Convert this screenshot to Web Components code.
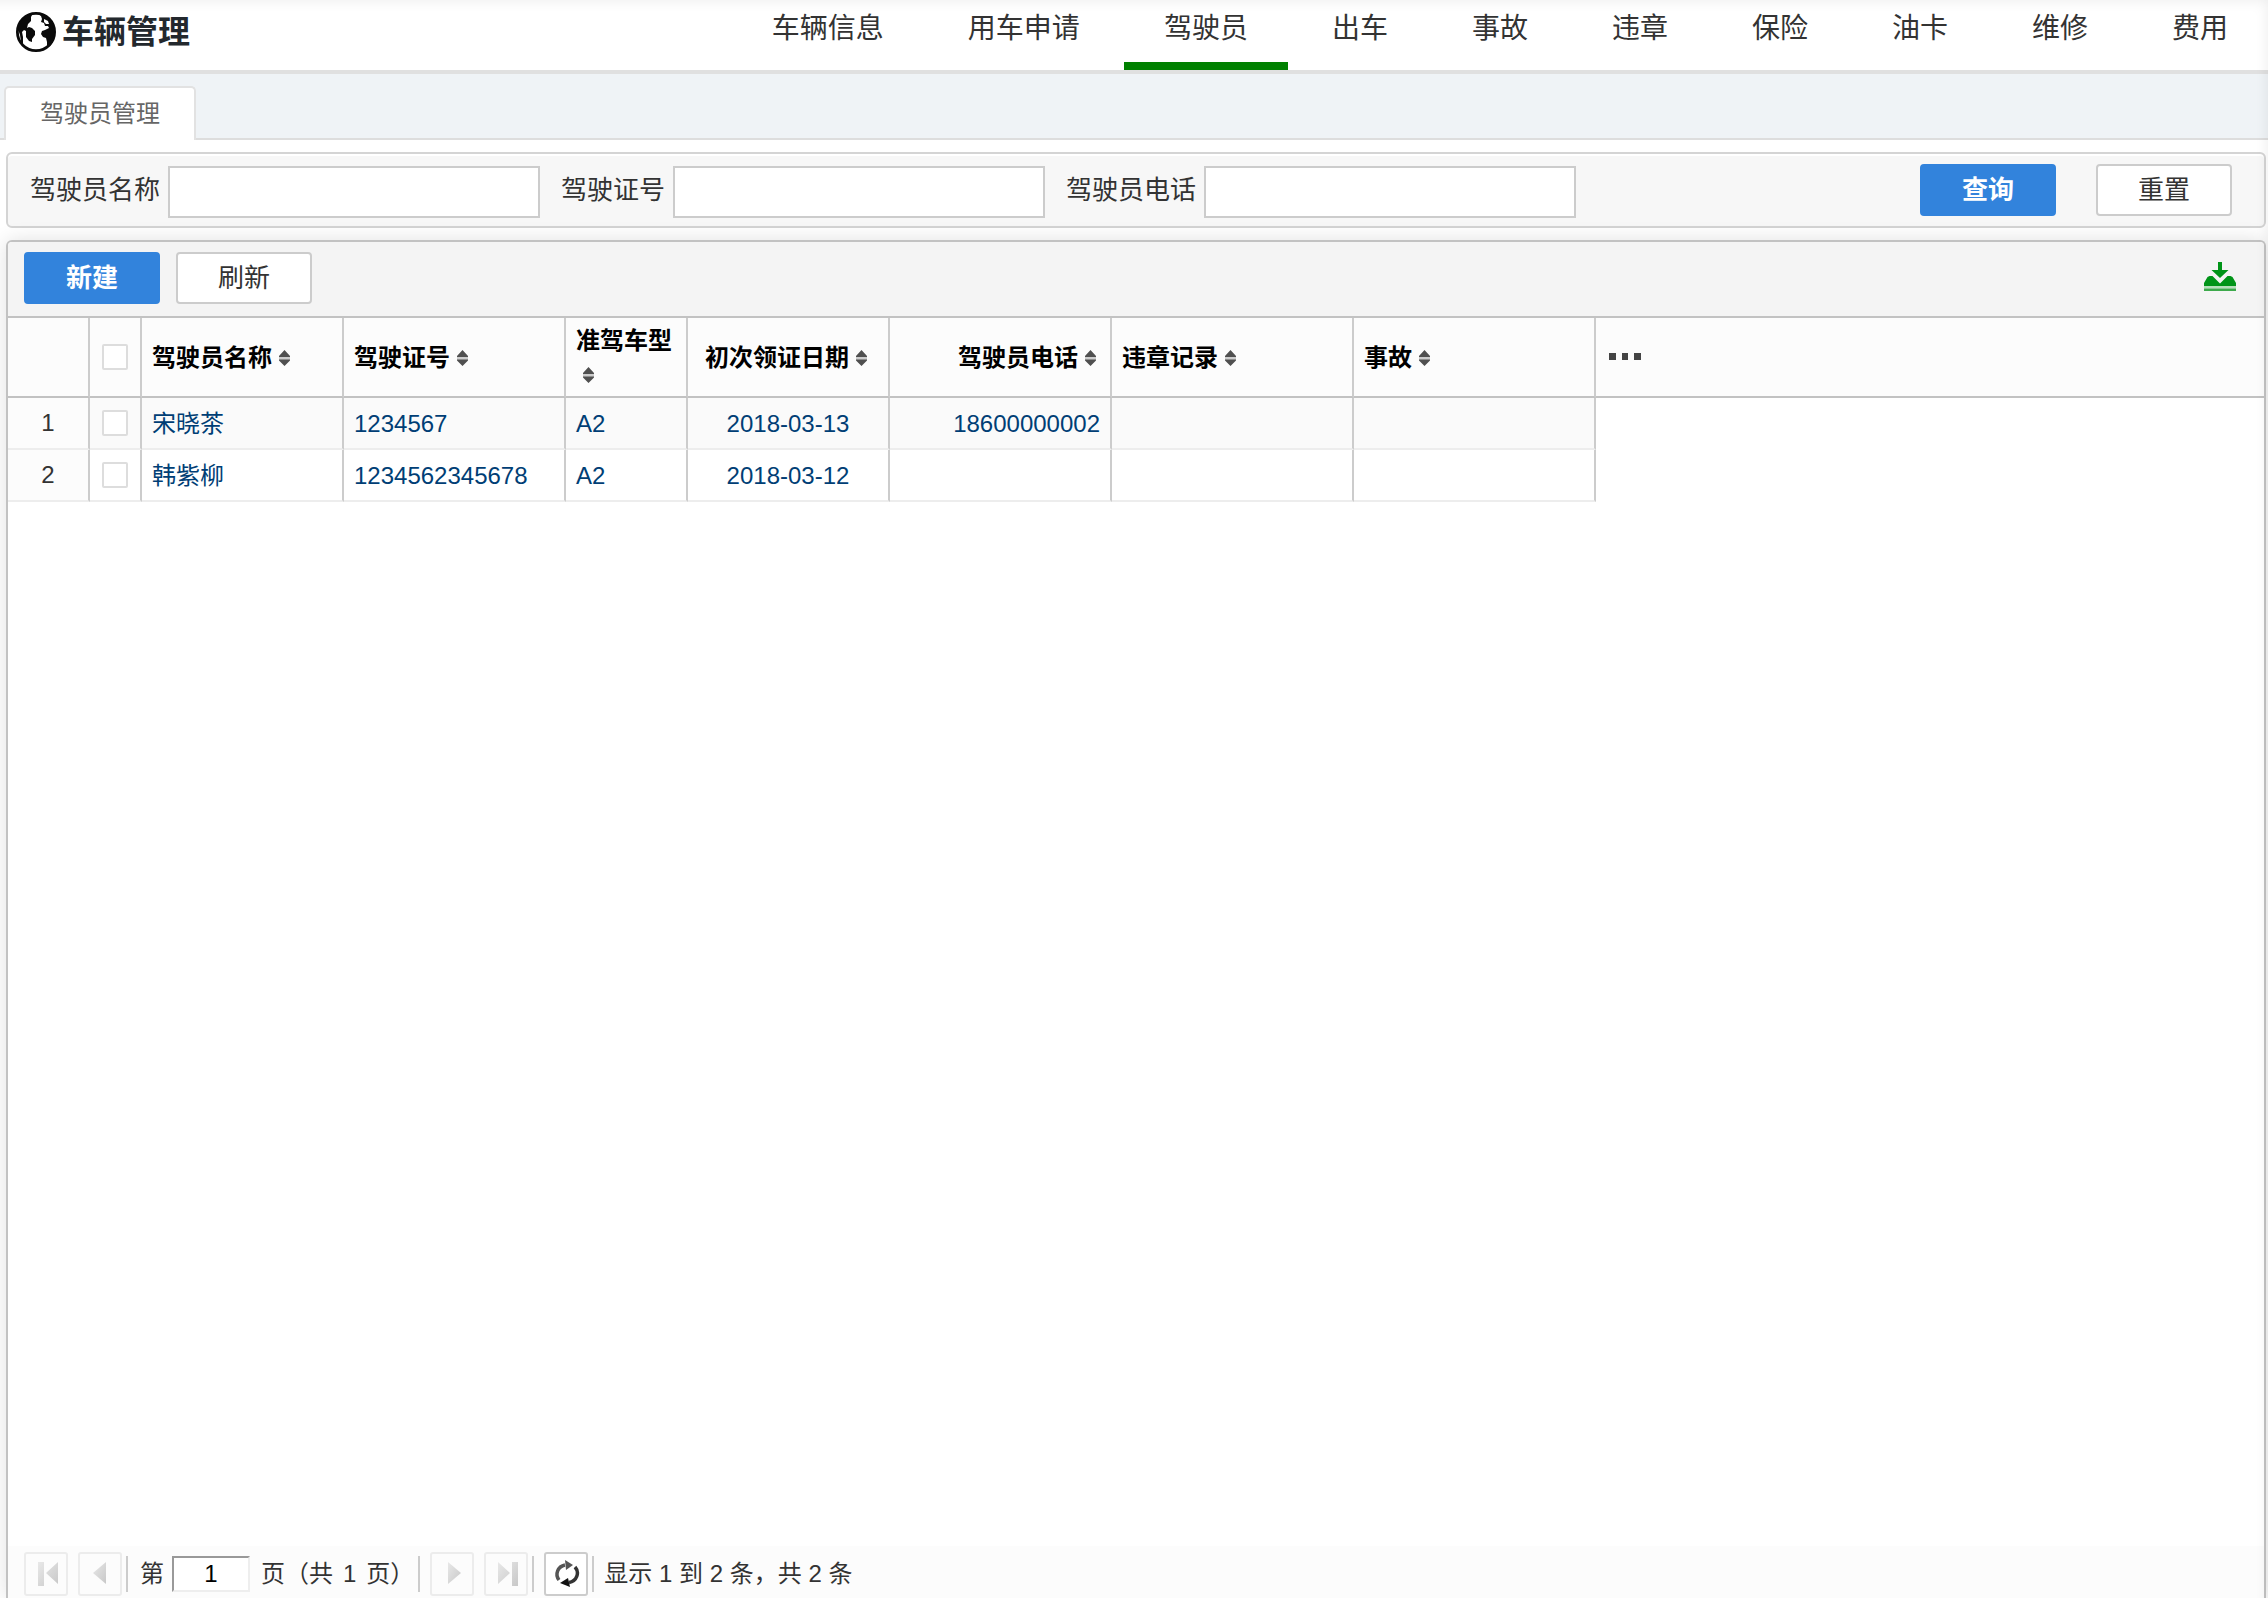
<!DOCTYPE html>
<html lang="zh-CN">
<head>
<meta charset="utf-8">
<title>车辆管理</title>
<style>
    body {
        margin: 0;
        height: 100vh;
        display: flex;
        flex-direction: column;
        overflow: hidden;
        background: #fff;
        color: #333;
        font-family: "Liberation Sans", "Noto Sans CJK SC", sans-serif;
        font-size: 24px;
    }
    body::after {
        content: "";
        position: fixed;
        inset: 0 0 -40px -40px;
        pointer-events: none;
        box-shadow: inset 0 0 14px rgba(0, 0, 0, 0.08);
    }
    driver-grid {
        flex: 1;
    }
</style>
</head>
<body>
<app-header>
    <nav-item>车辆信息</nav-item>
    <nav-item>用车申请</nav-item>
    <nav-item active>驾驶员</nav-item>
    <nav-item>出车</nav-item>
    <nav-item>事故</nav-item>
    <nav-item>违章</nav-item>
    <nav-item>保险</nav-item>
    <nav-item>油卡</nav-item>
    <nav-item>维修</nav-item>
    <nav-item>费用</nav-item>
</app-header>
<tab-bar>驾驶员管理</tab-bar>
<search-panel>
    <search-field label="驾驶员名称"></search-field>
    <search-field label="驾驶证号"></search-field>
    <search-field label="驾驶员电话"></search-field>
    <ui-button slot="actions" primary>查询</ui-button>
    <ui-button slot="actions">重置</ui-button>
</search-panel>
<driver-grid>
    <ui-button slot="tools" primary>新建</ui-button>
    <ui-button slot="tools">刷新</ui-button>
    <grid-pager slot="pager" page="1" pages="1" from="1" to="2" total="2"></grid-pager>
</driver-grid>

<script>
class AppHeader extends HTMLElement {
    constructor() {
        super();
        this.attachShadow({ mode: 'open' });
        this.shadowRoot.innerHTML = `
            <style>
                :host {
                    display: flex;
                    justify-content: space-between;
                    flex: none;
                    height: 70px;
                    border-bottom: 4px solid #e0e0e0;
                }
                h1 {
                    display: flex;
                    align-items: center;
                    gap: 6px;
                    height: 64px;
                    margin: 0 0 0 16px;
                    font-size: 32px;
                    line-height: 66px;
                    color: #23282d;
                }
                svg {
                    width: 40px;
                    height: 40px;
                }
                nav {
                    display: flex;
                    gap: 4px;
                }
            </style>
            <h1>
                <svg viewBox="0 0 40 40" aria-hidden="true">
                    <circle cx="20" cy="20" r="18.6" fill="#fff" stroke="#0a0a0a" stroke-width="2.8"/>
                    <path fill="#0a0a0a" d="M18 2C10 3 4 8 2 17l2 6 1 7 2 2 0-7-1-5 2-2 2 1 0 6 3 4 3 1 0-3 3-4 0-4-3-3-3-1-2 1 1-4 3-3 0-4 2-4z"/>
                    <path fill="#0a0a0a" d="M22 2l3 2 1 3-1 3 3 1 1 3 3 0 1 2-4 2-3 1-1 3 2 3 3 1 1 4 0 6 4-3 3-6 1-7-2-8-5-7-6-3z"/>
                    <path fill="#fff" d="M28 7l4 2 1 3-3 0-2-2z"/>
                </svg>
                <span>车辆管理</span>
            </h1>
            <nav><slot></slot></nav>
        `;
    }
}

class NavItem extends HTMLElement {
    constructor() {
        super();
        this.attachShadow({ mode: 'open' });
        this.shadowRoot.innerHTML = `
            <style>
                :host {
                    display: block;
                }
                a {
                    display: block;
                    box-sizing: border-box;
                    height: 70px;
                    padding: 0 40px;
                    border-bottom: 8px solid transparent;
                    color: #333;
                    font-size: 28px;
                    line-height: 58px;
                    text-decoration: none;
                }
                :host([active]) a {
                    border-color: #008000;
                }
            </style>
            <a href="#"><slot></slot></a>
        `;
    }
}

class TabBar extends HTMLElement {
    constructor() {
        super();
        this.attachShadow({ mode: 'open' });
        this.shadowRoot.innerHTML = `
            <style>
                :host {
                    display: flex;
                    flex: none;
                    align-items: flex-end;
                    height: 66px;
                    padding-left: 4px;
                    background: linear-gradient(#ddd, #ddd) bottom / 100% 2px no-repeat #eff3f6;
                }
                button {
                    box-sizing: border-box;
                    height: 54px;
                    padding: 0 34px;
                    border: 2px solid #e2e2e2;
                    border-bottom: 0;
                    border-radius: 5px 5px 0 0;
                    background: #fff;
                    color: #666;
                    font: inherit;
                    line-height: 52px;
                }
            </style>
            <button type="button"><slot></slot></button>
        `;
    }
}

class UiButton extends HTMLElement {
    constructor() {
        super();
        this.attachShadow({ mode: 'open' });
        this.shadowRoot.innerHTML = `
            <style>
                :host {
                    display: block;
                }
                button {
                    display: block;
                    box-sizing: border-box;
                    width: 136px;
                    height: 52px;
                    padding: 0;
                    border: 2px solid #ccc;
                    border-radius: 4px;
                    background: #fff;
                    color: #333;
                    font: inherit;
                    font-size: 26px;
                    line-height: 48px;
                }
                :host([primary]) button {
                    border-color: #3283dc;
                    background: #3283dc;
                    color: #fff;
                    font-weight: bold;
                }
            </style>
            <button type="button"><slot></slot></button>
        `;
    }
}

class SearchField extends HTMLElement {
    constructor() {
        super();
        this.attachShadow({ mode: 'open' });
        this.shadowRoot.innerHTML = `
            <style>
                :host {
                    display: block;
                }
                label {
                    display: flex;
                    align-items: flex-start;
                    gap: 8px;
                    font-size: 26px;
                    line-height: 48px;
                    white-space: nowrap;
                }
                input {
                    box-sizing: border-box;
                    width: 372px;
                    height: 52px;
                    padding: 0 8px;
                    border: 2px solid #ccc;
                    background: #fff;
                    font: inherit;
                }
            </style>
            <label><span></span><input type="text"></label>
        `;
        this.shadowRoot.querySelector('span').textContent = this.getAttribute('label');
    }
}

class SearchPanel extends HTMLElement {
    constructor() {
        super();
        this.attachShadow({ mode: 'open' });
        this.shadowRoot.innerHTML = `
            <style>
                :host {
                    display: block;
                    flex: none;
                    margin: 12px 2px 12px 6px;
                }
                form {
                    display: flex;
                    align-items: center;
                    justify-content: space-between;
                    box-sizing: border-box;
                    height: 76px;
                    padding: 0 32px 0 22px;
                    border: 2px solid #d4d4d4;
                    border-radius: 6px;
                    background: #f7f7f7;
                    box-shadow: inset 0 2px #fff;
                }
                .fields {
                    display: flex;
                    gap: 21px;
                    padding-top: 4px;
                }
                .actions {
                    display: flex;
                    gap: 40px;
                }
            </style>
            <form>
                <div class="fields"><slot></slot></div>
                <div class="actions"><slot name="actions"></slot></div>
            </form>
        `;
    }
}

class SortIcon extends HTMLElement {
    constructor() {
        super();
        this.attachShadow({ mode: 'open' });
        this.shadowRoot.innerHTML = `
            <style>
                :host {
                    display: inline-block;
                    padding: 0 4px 0 7px;
                }
                svg {
                    display: block;
                    width: 11px;
                    height: 16px;
                }
            </style>
            <svg viewBox="0 0 11 16" aria-hidden="true">
                <path fill="#ccc" d="M0 7h11v3H0z"/>
                <path fill="#505050" d="M5.500 0L11 6v1H0V6zM0 9.500h11v1L5.500 16 0 10.500z"/>
            </svg>
        `;
    }
}

class DriverGrid extends HTMLElement {
    static columns = [
        { title: '驾驶员名称', width: 202, align: 'left' },
        { title: '驾驶证号', width: 222, align: 'left' },
        { title: '准驾车型', width: 122, align: 'left' },
        { title: '初次领证日期', width: 202, align: 'center' },
        { title: '驾驶员电话', width: 222, align: 'right' },
        { title: '违章记录', width: 242, align: 'left' },
        { title: '事故', width: 242, align: 'left' }
    ];

    static rows = [
        ['宋晓茶', '1234567', 'A2', '2018-03-13', '18600000002', '', ''],
        ['韩紫柳', '1234562345678', 'A2', '2018-03-12', '', '', '']
    ];

    constructor() {
        super();
        this.attachShadow({ mode: 'open' });

        const { columns, rows } = DriverGrid;
        const cols = columns.map(c => `<col style="width: ${c.width}px">`).join('');
        const heads = columns.map(c => `<th class="text ${c.align}">${c.title}<sort-icon></sort-icon></th>`).join('');
        const body = rows.map((row, i) => `
            <tr>
                <td class="num">${i + 1}</td>
                <td class="check"><input type="checkbox" aria-label="选择"></td>
                ${row.map((text, j) => `<td class="text ${columns[j].align}">${text && `<a href="#">${text}</a>`}</td>`).join('')}
                <td class="rest"></td>
            </tr>
        `).join('');

        this.shadowRoot.innerHTML = `
            <style>
                :host {
                    display: flex;
                    flex-direction: column;
                    margin: 0 2px 0 6px;
                    border: 2px solid #c2c2c2;
                    border-bottom: 0;
                    border-radius: 6px 6px 0 0;
                    background: #fff;
                    box-shadow: 0 0 20px rgba(0, 0, 0, 0.12);
                }
                .toolbar {
                    display: flex;
                    align-items: center;
                    gap: 16px;
                    box-sizing: border-box;
                    height: 76px;
                    padding: 0 28px 2px 16px;
                    border-bottom: 2px solid #c2c2c2;
                    border-radius: 4px 4px 0 0;
                    background: #f4f4f4;
                }
                .icon {
                    padding: 0;
                    border: 0;
                    background: none;
                }
                .icon svg {
                    display: block;
                }
                .export {
                    margin-left: auto;
                }
                .body {
                    flex: 1;
                }
                table {
                    width: 100%;
                    table-layout: fixed;
                    border-collapse: separate;
                    border-spacing: 0;
                }
                th, td {
                    box-sizing: border-box;
                    padding: 0 10px;
                    border-right: 2px solid #ccc;
                    line-height: 34px;
                    vertical-align: middle;
                }
                th {
                    height: 80px;
                    border-bottom: 2px solid #c2c2c2;
                    background: #fcfcfc;
                    color: #000;
                }
                td {
                    height: 52px;
                    border-bottom: 2px solid #ededed;
                }
                .text {
                    padding-top: 2px;
                }
                tbody tr:nth-child(odd) td {
                    background: #fafafa;
                }
                tbody tr .num, tbody tr:nth-child(odd) .num {
                    background: #fcfcfc;
                    text-align: center;
                }
                .left { text-align: left; }
                .center { text-align: center; }
                .right { text-align: right; }
                .check {
                    padding: 0;
                    text-align: center;
                }
                th:last-child, td:last-child {
                    border-right: 0;
                }
                tbody tr td.rest, tbody tr:nth-child(odd) td.rest {
                    border: 0;
                    background: #fff;
                }
                a {
                    color: #003e75;
                    text-decoration: none;
                }
                input {
                    appearance: none;
                    display: block;
                    box-sizing: border-box;
                    width: 26px;
                    height: 26px;
                    margin: 0 auto;
                    border: 2px solid #ddd;
                    border-radius: 2px;
                    background: #fff;
                }
            </style>
            <div class="toolbar">
                <slot name="tools"></slot>
                <button class="icon export" type="button" aria-label="导出">
                    <svg width="32" height="32" viewBox="0 0 32 32">
                        <path fill="#009418" d="M14 0h4v8h6.500L16 16 7.500 8H14z"/>
                        <path fill="#009418" d="M0 24v-3l3.500-6 2-1h3L16 21.500l7.500-7.500h3l2 1 3.500 6v3z"/>
                        <path fill="#b5dfba" d="M0 24h32v2.500H0z"/>
                        <path fill="#3daa4c" d="M0 26.500h32V29H0z"/>
                    </svg>
                </button>
            </div>
            <div class="body">
                <table>
                    <colgroup><col style="width: 82px"><col style="width: 52px">${cols}<col></colgroup>
                    <thead>
                        <tr>
                            <th></th>
                            <th class="check"><input type="checkbox" aria-label="全选"></th>
                            ${heads}
                            <th class="left">
                                <button class="icon" type="button" aria-label="更多">
                                    <svg width="40" height="16" viewBox="0 0 40 16">
                                        <path fill="#444" d="M3 4h7v7H3zM16 4h6v7h-6zM28 4h7v7h-7z"/>
                                    </svg>
                                </button>
                            </th>
                        </tr>
                    </thead>
                    <tbody>${body}</tbody>
                </table>
            </div>
            <slot name="pager"></slot>
        `;
    }
}

class GridPager extends HTMLElement {
    constructor() {
        super();
        this.attachShadow({ mode: 'open' });
        const get = name => this.getAttribute(name);
        this.shadowRoot.innerHTML = `
            <style>
                :host {
                    display: flex;
                    align-items: center;
                    box-sizing: border-box;
                    height: 52px;
                    padding: 4px 0 0 16px;
                    background: #fcfcfc;
                    line-height: 36px;
                    white-space: nowrap;
                }
                button {
                    display: grid;
                    place-items: center;
                    box-sizing: border-box;
                    width: 44px;
                    height: 44px;
                    padding: 0;
                    border: 2px solid #ccc;
                    border-radius: 3px;
                    background: #fff;
                }
                button:disabled {
                    border-color: #ececec;
                    background: #fcfcfc;
                }
                .pair {
                    display: flex;
                    gap: 10px;
                }
                i {
                    width: 2px;
                    height: 36px;
                    margin: 0 10px 0 4px;
                    background: #ccc;
                }
                label {
                    display: flex;
                    align-items: center;
                    gap: 8px;
                    padding-left: 2px;
                }
                input {
                    box-sizing: border-box;
                    width: 78px;
                    height: 36px;
                    padding: 0;
                    border: 2px solid;
                    border-color: #999 #eee #eee #999;
                    background: #fff;
                    color: #000;
                    font: inherit;
                    text-align: center;
                }
                .pages {
                    display: flex;
                    gap: 10px;
                    padding-left: 11px;
                }
            </style>
            <svg width="0" height="0" style="position: absolute" aria-hidden="true">
                <linearGradient id="gray" x2="1" y2="1">
                    <stop stop-color="#e8e8e8"/>
                    <stop offset="1" stop-color="#c8c8c8"/>
                </linearGradient>
            </svg>
            <div class="pair">
                <button type="button" disabled aria-label="首页">
                    <svg width="32" height="28" viewBox="0 0 32 28"><path fill="url(#gray)" d="M8 2h6v24H8zM28 2v22L16 13z"/></svg>
                </button>
                <button type="button" disabled aria-label="上一页">
                    <svg width="32" height="28" viewBox="0 0 32 28"><path fill="url(#gray)" d="M22 2v22L9 13z"/></svg>
                </button>
            </div>
            <i></i>
            <label>第<input type="text" value="${get('page')}"></label>
            <span class="pages"><span>页（共</span><span>${get('pages')}</span><span>页）</span></span>
            <i></i>
            <div class="pair">
                <button type="button" disabled aria-label="下一页">
                    <svg width="32" height="28" viewBox="0 0 32 28"><path fill="url(#gray)" d="M12 2l13 11-13 11z"/></svg>
                </button>
                <button type="button" disabled aria-label="末页">
                    <svg width="32" height="28" viewBox="0 0 32 28"><path fill="url(#gray)" d="M8 2l12 11L8 24zM22 2h6v24h-6z"/></svg>
                </button>
            </div>
            <i></i>
            <button type="button" aria-label="刷新">
                <svg width="28" height="28" viewBox="0 0 28 28" fill="none" stroke="#333" stroke-width="3.500">
                    <path stroke="#555" d="M7 20A10 9.500 0 0 1 13 5"/>
                    <path d="M23 7A10 9.500 0 0 1 17 22.500"/>
                    <path fill="#555" stroke="none" d="M13 0l8 5-7 5z"/>
                    <path fill="#111" stroke="none" d="M18 27l-10-4 8-5z"/>
                </svg>
            </button>
            <i></i>
            <span>显示 ${get('from')} 到 ${get('to')} 条，共 ${get('total')} 条</span>
        `;
    }
}

customElements.define('app-header', AppHeader);
customElements.define('nav-item', NavItem);
customElements.define('tab-bar', TabBar);
customElements.define('ui-button', UiButton);
customElements.define('search-field', SearchField);
customElements.define('search-panel', SearchPanel);
customElements.define('sort-icon', SortIcon);
customElements.define('driver-grid', DriverGrid);
customElements.define('grid-pager', GridPager);
</script>
</body>
</html>
